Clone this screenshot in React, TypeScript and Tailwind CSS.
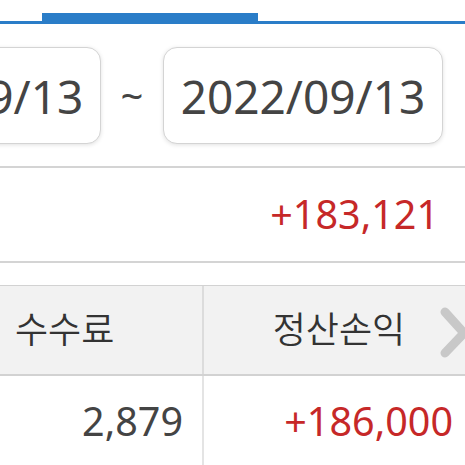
import React from 'react';

const font = { fontFamily: '"Noto Sans", "Noto Sans CJK KR", sans-serif' };

const DateBox = ({ value }: { value: string }) => (
  <div className="w-[280px] h-[97px] shrink-0 flex items-center justify-center rounded-[14px] border border-[#d4d4d4] bg-white shadow-[0_1px_4px_rgba(0,0,0,0.12)]">
    <span className="text-[46px] text-[#444] leading-none">{value}</span>
  </div>
);

const App = () => {
  return (
    <div className="w-[465px] h-[465px] overflow-hidden bg-white relative" style={font}>
      {/* tabs underline */}
      <div className="h-[21px] pt-[13px]">
        <div className="ml-[42px] w-[216px] h-[8px] bg-[#2a7dc8]" />
      </div>
      <div className="h-[3px] bg-[#2a7dc8]" />

      {/* date range */}
      <div className="h-[142px] flex items-center overflow-hidden">
        <div className="flex items-center -ml-[179px] pt-[1px]">
          <DateBox value="2022/09/13" />
          <span className="w-[62px] text-center text-[40px] text-[#444] leading-none">~</span>
          <DateBox value="2022/09/13" />
        </div>
      </div>
      <div className="h-[2px] bg-[#d4d4d4]" />

      {/* total */}
      <div className="h-[93px] flex items-center justify-end pr-[26px]">
        <span className="text-[39.5px] text-[#c62828] leading-none">+183,121</span>
      </div>
      <div className="h-[2px] bg-[#d4d4d4]" />

      <div className="h-[22px]" />

      {/* table */}
      <div className="w-[500px]">
        <div className="flex h-[91px] bg-[#f2f2f2] border-t border-b-2 border-[#d2d2d2] font-[350]">
          <div className="w-[202px] flex items-center pl-[15px] text-[36px] text-[#333] leading-none">수수료</div>
          <div className="w-[2px] bg-[#dcdcdc]" />
          <div className="w-[270px] flex items-center justify-center text-[36px] text-[#333] leading-none">정산손익</div>
        </div>
        <div className="flex h-[92px]">
          <div className="w-[202px] flex items-center justify-end pr-[19px] text-[39.5px] text-[#444] leading-none">2,879</div>
          <div className="w-[2px] bg-[#e4e4e4]" />
          <div className="w-[270px] flex items-center justify-end pr-[21px] text-[39.5px] text-[#c62828] leading-none">+186,000</div>
        </div>
      </div>

      {/* scroll hint chevron */}
      <svg className="absolute left-[438px] top-[306px]" width="32" height="52" viewBox="0 0 32 52">
        <path d="M7 6 L26 27 L7 47" fill="none" stroke="#c8c8c8" strokeWidth="9" strokeLinecap="round" strokeLinejoin="round" />
      </svg>
    </div>
  );
};

export default App;
